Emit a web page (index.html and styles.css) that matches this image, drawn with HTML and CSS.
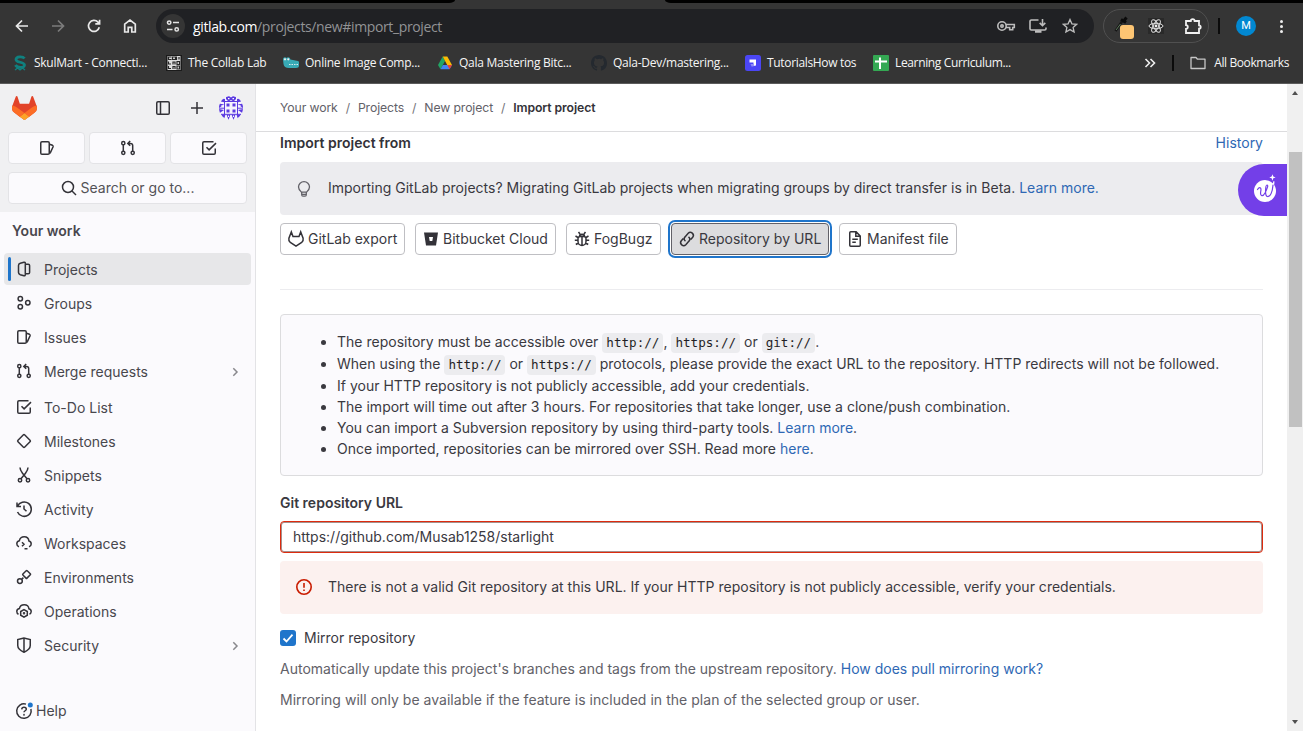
FILE: index.html
```html
<!DOCTYPE html>
<html lang="en">
<head>
<meta charset="utf-8">
<title>Import project · GitLab</title>
<link rel="stylesheet" href="styles.css">
</head>
<body>
<svg class="sprite" aria-hidden="true">
  <symbol id="issues" viewBox="0 0 16 16"><rect x="1.75" y="1.75" width="8.5" height="12.5" rx="1.25"/><path d="M10.5 4.2l3 1.1c.6.3.8.8.6 1.4l-2.6 5.6c-.3.6-.7 1-1.2 1.1"/></symbol>
  <symbol id="merge" viewBox="0 0 16 16"><circle cx="3.3" cy="3.2" r="1.6"/><circle cx="3.3" cy="12.8" r="1.6"/><circle cx="12.7" cy="12.8" r="1.6"/><path d="M3.3 4.8v6.4M12.7 11.2V5.6c0-1.4-.8-2.2-2.2-2.2H8.4M10.2 1L7.8 3.4l2.4 2.4"/></symbol>
  <symbol id="todo" viewBox="0 0 16 16"><path d="M12.5 1.75H3c-.7 0-1.25.5-1.25 1.25v10c0 .7.5 1.25 1.25 1.25h10c.7 0 1.25-.5 1.25-1.25V8.5M5.5 7.3l2.6 2.6 6.9-6.8"/></symbol>
  <symbol id="chevron" viewBox="0 0 16 16"><path d="M6.3 4.3L10 8l-3.700 3.700"/></symbol>
</svg>

<header class="chrome">
  <div class="tabstrip"><span class="tab-left"></span><span class="tab-right"></span></div>
  <div class="toolbar">
    <svg class="nav n1" viewBox="0 0 16 16"><path d="M14 8H2.500M8 2.500L2.500 8 8 13.500"/></svg>
    <svg class="nav n2" viewBox="0 0 16 16"><path d="M2 8h11.500M8 2.500L13.500 8 8 13.500"/></svg>
    <svg class="nav n3" viewBox="0 0 16 16"><path d="M13.300 9.300A5.500 5.500 0 1 1 12 4.200l1.300 1.300M13.600 1.700v4.200H9.300"/></svg>
    <svg class="nav n4" viewBox="0 0 16 16"><path d="M2.700 14V6.200L8 2l5.300 4.200V14H9.800V9.300H6.200V14z"/></svg>
    <div class="omnibox">
      <span class="site"><svg viewBox="0 0 16 16"><circle cx="4.200" cy="4.600" r="1.700"/><path d="M8 4.600h6M2 11.400h5.500"/><circle cx="11.700" cy="11.400" r="1.700"/></svg></span>
      <span class="url"><b>gitlab.com</b>/projects/new#import_project</span>
      <svg class="ob key" viewBox="0 0 20 16"><circle cx="6" cy="8" r="4.200"/><circle cx="6" cy="8" r="1.200"/><path d="M10 6.500h8.300v3h-1.600v2.300h-3V9.500H10"/></svg>
      <svg class="ob inst" viewBox="0 0 18 16"><path d="M9.500 2H2.300C1.600 2 1 2.500 1 3.200v7.600c0 .7.600 1.200 1.300 1.200h13.400c.7 0 1.300-.5 1.300-1.200V9.500M13.500 1v6.500M10.700 4.900l2.800 2.800 2.800-2.800"/><path d="M6 13.500h6.500" class="foot"/></svg>
      <svg class="ob star" viewBox="0 0 16 16"><path d="M8 1.500l1.900 4.300 4.700.5-3.500 3.100 1 4.600L8 11.600 3.900 14l1-4.600L1.400 6.300l4.700-.5z"/></svg>
    </div>
    <div class="extensions">
      <svg class="picker" viewBox="0 0 20 24"><path d="M1.500 15L8 5.500" stroke="#161616" stroke-width="2.500"/><path d="M2 14l4.500-6" stroke="#5e7c5d"/><path d="M7 3.500l5 3M10.500 4l2-2.500" stroke="#0b0b0b" stroke-width="3"/><rect x="6" y="9" width="14" height="14" rx="3" fill="#fdc573"/></svg>
      <svg class="react" viewBox="0 0 16 16"><path d="M0 0h16v16H0z" fill="#292929"/><g fill="none" stroke="#ddd" stroke-width="1"><ellipse cx="8" cy="8" rx="7" ry="2.700"/><ellipse cx="8" cy="8" rx="7" ry="2.700" transform="rotate(60 8 8)"/><ellipse cx="8" cy="8" rx="7" ry="2.700" transform="rotate(120 8 8)"/></g><circle cx="8" cy="8" r="1.400" fill="#eee"/></svg>
      <svg class="puzzle" viewBox="0 0 18 18"><path d="M2 4h4.800a1.900 1.900 0 0 1 3.800 0H15v4.300a1.700 1.700 0 0 1 0 3.400V16H2v-4.200c2.400-.2 2.400-3.400 0-3.600z"/></svg>
    </div>
    <span class="bar"></span>
    <span class="profile">M</span>
    <span class="dots"><i></i><i></i><i></i></span>
  </div>
  <nav class="bookmarks">
    <a class="bm w154"><svg viewBox="0 0 16 16"><path d="M12.500 3.500C11 1.200 4 1 4 4.500s8.500 2 8.500 5.500S5 13 3.500 10" fill="none" stroke="#10807f" stroke-width="2.800"/><path d="M3 15l2.500-2 2.500 2 2.500-2 2.500 2" fill="none" stroke="#10807f" stroke-width="1.300"/></svg><span>SkulMart - Connecti...</span></a>
    <a class="bm w117"><svg viewBox="0 0 16 16"><path d="M0 0h16v16H0z" fill="#1b1b1b"/><path d="M1.500 1h13v14h-13z" fill="#ddd"/><path d="M5.500 2h-3v2.500h3M6.500 2h3v2.500h-3zM10.500 1.500v3.500M13 2v2.500M2.500 6.500v2.500H5M7 9.500V7h2v2.500M11 6.500v3h2.500v-3zM2.500 11v2.500H5M7 14v-2.500h2V14M11 11v3h2.500v-3z" fill="none" stroke="#252525" stroke-width="1.200"/></svg><span>The Collab Lab</span></a>
    <a class="bm w154"><svg viewBox="0 0 16 16"><path d="M0 4.500c0-2.500 2.500-3 3.500-1.500 1.200-1.500 3.500-1 3.900 1.500L15 6q1 0 1 1.500v3Q16 13 13 13H6Q1 13 .5 9z" fill="#38aab5"/><circle cx="2" cy="4.300" r="1.100" fill="#eee"/><circle cx="5.300" cy="4.300" r="1.100" fill="#eee"/><path d="M6 9.500h9" stroke="#d8eced" stroke-dasharray="1.500 1"/></svg><span>Online Image Comp...</span></a>
    <a class="bm w154"><svg viewBox="0 0 16 16"><path d="M5.700 1.500L1 10l2.500 4.200L8 6z" fill="#22a565"/><path d="M5.700 1.500h4.600L15 10h-4.800z" fill="#fbbc05"/><path d="M3.500 14.200L5.900 10H15l-2.500 4.200z" fill="#4285f4"/><path d="M10.300 10H15l-2.500 4.200z" fill="#ea4335"/></svg><span>Qala Mastering Bitc...</span></a>
    <a class="bm w154"><svg viewBox="0 0 16 16"><path fill="#24292f" d="M8 0C3.580 0 0 3.580 0 8c0 3.540 2.290 6.530 5.470 7.590.4.070.55-.17.55-.38 0-.19-.01-.82-.01-1.490-2.010.37-2.530-.49-2.690-.94-.09-.23-.48-.94-.82-1.130-.28-.15-.68-.52-.01-.53.63-.01 1.080.58 1.230.82.720 1.210 1.870.87 2.330.66.070-.52.280-.87.510-1.070-1.780-.2-3.640-.89-3.640-3.950 0-.87.310-1.590.820-2.150-.08-.2-.36-1.020.080-2.120 0 0 .67-.21 2.200.82A7.600 7.600 0 0 1 8 3.870c.68 0 1.360.09 2 .26 1.530-1.040 2.200-.82 2.200-.82.44 1.100.16 1.920.08 2.120.51.56.82 1.270.82 2.150 0 3.070-1.870 3.750-3.650 3.950.29.25.54.73.54 1.480 0 1.070-.01 1.930-.01 2.200 0 .21.15.46.55.38A8 8 0 0 0 16 8c0-4.420-3.580-8-8-8z"/></svg><span>Qala-Dev/mastering...</span></a>
    <a class="bm w128"><svg viewBox="0 0 16 16"><rect width="16" height="16" rx="2.500" fill="#4b46f5"/><path d="M4.500 4.500H11v6L8.500 11V7.500h-4z" fill="#fff"/><path d="M5.500 9h3v2.500h-2z" fill="#8f8cf8"/></svg><span>TutorialsHow tos</span></a>
    <a class="bm last"><svg viewBox="0 0 16 16"><rect width="16" height="16" rx="1" fill="#34a853"/><path d="M2 6.500h12M7 2.500v11.500" stroke="#fff" stroke-width="2"/></svg><span>Learning Curriculum...</span></a>
    <svg class="more" viewBox="0 0 12 12"><path d="M1.500 2L5.500 6l-4 4M6.500 2l4 4-4 4"/></svg>
    <span class="bar small"></span>
    <a class="bm all"><svg viewBox="0 0 16 14"><path d="M1 1.500h5l1.500 1.700H15v9.300H1z" fill="none" stroke="#c7c7c7" stroke-width="1.300" stroke-linejoin="round"/></svg><span>All Bookmarks</span></a>
  </nav>
</header>

<div class="page">
  <aside class="sidebar">
    <div class="top">
      <div class="brand">
        <svg class="logo" viewBox="0 0 25 24"><path d="m24.507 9.500-.034-.09L21.082.562a.896.896 0 0 0-1.694.091l-2.290 7.010H7.825L5.535.653a.898.898 0 0 0-1.694-.09L.451 9.411.416 9.500a6.297 6.297 0 0 0 2.090 7.278l.012.01.03.022 5.160 3.867 2.560 1.935 1.554 1.176a1.051 1.051 0 0 0 1.268 0l1.555-1.176 2.560-1.935 5.197-3.890.014-.01A6.297 6.297 0 0 0 24.507 9.500Z" fill="#E24329"/><path d="m24.507 9.500-.034-.09a11.440 11.440 0 0 0-4.560 2.051l-7.447 5.632 4.742 3.584 5.197-3.890.014-.01A6.297 6.297 0 0 0 24.507 9.500Z" fill="#FC6D26"/><path d="m7.707 20.677 2.560 1.935 1.555 1.176a1.051 1.051 0 0 0 1.268 0l1.555-1.176 2.560-1.935-4.743-3.584-4.755 3.584Z" fill="#FCA326"/><path d="M5.010 11.461a11.430 11.430 0 0 0-4.560-2.050L.416 9.500a6.297 6.297 0 0 0 2.090 7.278l.012.01.03.022 5.160 3.867 4.745-3.584-7.444-5.632Z" fill="#FC6D26"/></svg>
        <svg class="ic collapse" viewBox="0 0 16 16"><rect x="1.750" y="1.750" width="12.500" height="12.500" rx="1.250"/><path d="M5.500 2v12"/></svg>
        <svg class="ic plus" viewBox="0 0 16 16"><path d="M8 2v12M2 8h12"/></svg>
        <svg class="avatar" viewBox="0 0 24 24"><defs><clipPath id="round"><circle cx="12" cy="12" r="12"/></clipPath></defs><g clip-path="url(#round)"><path fill="#f6f4fd" d="M0 0h24v24H0z"/><g fill="#5c3be0"><path d="M7 0h3l2 1.500L14 0h3v3l-2.500 2.500L12 4 9.500 5.500 7 3zM2 2l4 1v3.500L2 5.500zM22 2l-4 1v3.500l4-1zM7.500 7.500h3v3h-3zM13.500 7.500h3v3h-3zM7.500 13.500h3v3h-3zM13.500 13.500h3v3h-3zM0 7.500l5 1-5 3.500zM24 7.500l-5 1 5 3.500zM0 13l5 1-5 3.500zM24 13l-5 1 5 3.500zM2 18.500h4.500l-1.500 5zM7.500 18.500h4L9.500 24zM12.500 18.500h4L14.500 24zM17.500 18.500H22l-3 5z"/></g><g fill="none" stroke="#5c3be0"><path d="M5.500 3v16M18.500 3v16M5 5.500h14M2 18.300h20M0 12.200h5M19 12.200h5"/></g><path fill="#fff" d="M9 2h1.500v1.200H9zM13.500 2H15v1.200h-1.500zM2.500 9h1.200v1.200H2.500zM20.300 9h1.200v1.200h-1.200zM9 19.500h1v1.500H9zM14 19.500h1v1.500h-1z"/></g></svg>
      </div>
      <div class="counters">
        <a><svg class="ic"><use href="#issues"/></svg></a>
        <a><svg class="ic"><use href="#merge"/></svg></a>
        <a><svg class="ic"><use href="#todo"/></svg></a>
      </div>
      <div class="search"><svg class="ic" viewBox="0 0 16 16"><circle cx="7" cy="7" r="5.500"/><path d="M11 11l4 4"/></svg><span>Search or go to...</span></div>
    </div>
    <h2>Your work</h2>
    <ul class="menu">
      <li class="active"><svg class="ic" viewBox="0 0 16 16"><path d="M9.300 2.200v11.600M9.300 3.200h2.900c.8 0 1.400.6 1.400 1.400v6.800c0 .8-.6 1.400-1.400 1.400H9.300M8 14.800l-3.700-1.100c-1.200-.4-1.800-1-1.800-2.100V4.400c0-1.100.6-1.700 1.800-2.100L8 1.200c.8-.2 1.300.2 1.300 1v11.600c0 .8-.5 1.200-1.300 1z"/></svg><span>Projects</span></li>
      <li><svg class="ic" viewBox="0 0 16 16"><circle cx="4.300" cy="3.700" r="2.200"/><circle cx="4.300" cy="11.800" r="2.200"/><circle cx="11.800" cy="7.800" r="2.200"/></svg><span>Groups</span></li>
      <li><svg class="ic"><use href="#issues"/></svg><span>Issues</span></li>
      <li class="parent"><svg class="ic"><use href="#merge"/></svg><span>Merge requests</span><svg class="ic chev"><use href="#chevron"/></svg></li>
      <li><svg class="ic"><use href="#todo"/></svg><span>To-Do List</span></li>
      <li><svg class="ic" viewBox="0 0 16 16"><path d="M7.200 2L2 7.200q-.8.800 0 1.600L7.200 14q.8.800 1.600 0L14 8.800q.8-.8 0-1.600L8.800 2q-.8-.8-1.600 0z"/></svg><span>Milestones</span></li>
      <li><svg class="ic" viewBox="0 0 16 16"><circle cx="4" cy="13.300" r="1.700"/><circle cx="12" cy="13.300" r="1.700"/><path d="M4 .5c0 2 .8 3.500 2.500 5.700L11 11.800M12 .5c0 2-.8 3.500-2.500 5.700L5 11.800"/></svg><span>Snippets</span></li>
      <li><svg class="ic" viewBox="0 0 16 16"><path d="M1.500 5.300A7.200 7.200 0 1 1 1.500 11M1 1.500v4h4M8 4.500V8l2.500 2.300"/></svg><span>Activity</span></li>
      <li><svg class="ic" viewBox="0 0 16 16"><path d="M3 11.800C1.500 11.300.8 10 .8 8.800c0-1.600 1.100-2.800 2.600-3.100C3.900 3.300 5.900 1.800 8.200 1.800c2.600 0 4.500 1.900 4.700 4.200 1.500.4 2.300 1.500 2.300 2.900 0 1.300-.8 2.400-2.200 2.800M6 7.300l2 2-2 2M8.500 13.800h3"/></svg><span>Workspaces</span></li>
      <li><svg class="ic" viewBox="0 0 16 16"><circle cx="3.900" cy="12.100" r="2.400"/><path d="M5.700 10.300l1.700-1.700M10.200 1.700L6.900 5q-.5.500 0 1l3.100 3.100q.5.500 1 0l3.300-3.300q.5-.5 0-1l-3.100-3.100q-.5-.5-1 0z"/></svg><span>Environments</span></li>
      <li><svg class="ic" viewBox="0 0 16 16"><path d="M2.500 11.200C1.300 10.700.8 9.700.8 8.600c0-1.600 1.100-2.700 2.600-3C3.900 3.300 5.900 1.800 8.200 1.800c2.600 0 4.500 1.800 4.700 4 1.500.4 2.300 1.500 2.300 2.800 0 1.100-.6 2.100-1.700 2.600M8 6.600l3.300 1.900v3.700L8 14.100l-3.300-1.900V8.500z"/><circle cx="8" cy="10.300" r=".5"/></svg><span>Operations</span></li>
      <li><svg class="ic" viewBox="0 0 16 16"><path d="M8 .9L1.750 2.500v6c0 3 2.500 5.100 6.250 6.700 3.750-1.600 6.250-3.700 6.250-6.700v-6zM8 1v14"/></svg><span>Security</span><svg class="ic chev"><use href="#chevron"/></svg></li>
    </ul>
    <div class="help"><svg class="ic" viewBox="0 0 16 16"><path d="M10 1.100A7.250 7.250 0 1 0 14.900 6"/><path d="M5.700 6.300C5.900 4.800 6.900 4.200 8 4.200c1.400 0 2.300.8 2.300 2C10.300 7.700 8 7.800 8 9.300"/><circle cx="8" cy="11.700" r=".3"/><circle cx="14.300" cy="2" r="2.500" class="dot"/></svg><span>Help</span></div>
  </aside>

  <main>
    <nav class="crumbs"><span>Your work</span><i>/</i><span>Projects</span><i>/</i><span>New project</span><i>/</i><b>Import project</b></nav>
    <div class="content">
      <div class="heading"><h1>Import project from</h1><a>History</a></div>
      <div class="alert info"><svg class="ic" viewBox="0 0 16 16"><path d="M5.500 11.200C4 9.700 2.500 8.400 2.500 6a5.500 5.300 0 0 1 11 0c0 2.400-1.500 3.700-3 5.200zM5.700 11.500v2.200c0 1 .5 1.500 1.300 1.500h2c.8 0 1.300-.5 1.300-1.500v-2.200M5.700 13.300h4.600"/></svg><p>Importing GitLab projects? Migrating GitLab projects when migrating groups by direct transfer is in Beta. <a>Learn more.</a></p></div>
      <div class="sources">
        <button class="b1"><svg class="ic" viewBox="0 0 16 16"><path d="M3.300.9L.9 7.300c-.4 1.700.2 3.100 1.400 4L8 15.200l5.700-3.900c1.200-.9 1.800-2.300 1.400-4L12.700.9 11 5.500H5z"/></svg><span>GitLab export</span></button>
        <button class="b2"><svg class="ic" viewBox="0 0 16 16"><path class="solid" fill-rule="evenodd" d="M1 1.500h14l-2 13H3zM6 6l.7 4h2.600L10 6z"/></svg><span>Bitbucket Cloud</span></button>
        <button class="b3"><svg class="ic" viewBox="0 0 16 16"><path d="M4 7.500C4 4.500 12 4.500 12 7.500v3a4 4 0 0 1-8 0zM5.500 5.500c0-3 5-3 5 0M4.500 1l1.500 2M11.500 1L10 3M8 6v8.500M4 6.500L1.500 5M12 6.500L14.500 5M4 9.300H.8M12 9.300h3.200M4.300 12l-2.500 1.500M11.700 12l2.500 1.500"/></svg><span>FogBugz</span></button>
        <button class="b4 selected"><svg class="ic" viewBox="0 0 16 16"><path d="M6.500 10.200C4.800 8.800 4.900 7 6 5.900l3.200-3.600c2.600-2.600 6.800.9 4.500 3.900l-2 2.300M9.500 5.800c1.700 1.400 1.600 3.200.5 4.300l-3.200 3.600c-2.600 2.600-6.800-.9-4.500-3.900l2-2.300"/></svg><span>Repository by URL</span></button>
        <button class="b5"><svg class="ic" viewBox="0 0 16 16"><path d="M3.750.85h5.400l4.100 4.100v9.200c0 .6-.4 1-1 1h-8.500c-.6 0-1-.4-1-1V1.850c0-.6.4-1 1-1zM8.800 1v4.300H13M5.300 8.300h5.500M5.300 11.300h3.500"/></svg><span>Manifest file</span></button>
      </div>
      <hr>
      <ul class="notes">
        <li>The repository must be accessible over <code>http://</code>, <code>https://</code> or <code>git://</code>.</li>
        <li>When using the <code>http://</code> or <code>https://</code> protocols, please provide the exact URL to the repository. HTTP redirects will not be followed.</li>
        <li>If your HTTP repository is not publicly accessible, add your credentials.</li>
        <li>The import will time out after 3 hours. For repositories that take longer, use a clone/push combination.</li>
        <li>You can import a Subversion repository by using third-party tools. <a>Learn more</a>.</li>
        <li>Once imported, repositories can be mirrored over SSH. Read more <a>here</a>.</li>
      </ul>
      <label class="field">Git repository URL</label>
      <div class="input">https://github.com/Musab1258/starlight</div>
      <div class="alert danger"><svg class="ic" viewBox="0 0 16 16"><circle cx="8" cy="8" r="7.200"/><path d="M8 4v4.700M8 10.500v1.500"/></svg><p>There is not a valid Git repository at this URL. If your HTTP repository is not publicly accessible, verify your credentials.</p></div>
      <div class="check"><svg viewBox="0 0 16 16"><rect width="16" height="16" rx="3" fill="#1f75cb"/><path d="M3.500 8.500l3 3 6-6.800" fill="none" stroke="#fff" stroke-width="1.800"/></svg><span>Mirror repository</span></div>
      <p class="hint">Automatically update this project's branches and tags from the upstream repository. <a>How does pull mirroring work?</a></p>
      <p class="hint wide">Mirroring will only be available if the feature is included in the plan of the selected group or user.</p>
    </div>
    <div class="widget"><svg viewBox="0 0 28 32"><circle cx="13" cy="18" r="11" fill="#fff"/><path d="M18.500 4.500h3l3 6-3 1z" fill="#733fe8"/><path d="M20 13l1.500-5 1 .5-.5 5z" fill="#fff"/><path d="M5.500 16.500c2-3 4-2 3.300 1.500-1 5 1.700 6.500 4.200 2 2.500-5 3.500-8 2-8s-2.500 11 .500 11.500c3 .5 5-5 5.500-11.500" fill="none" stroke="#733fe8" stroke-width="1.200" stroke-linecap="round"/><path d="M20.500 1.200l.8 2.300 2.300.9-2.300.9-.8 2.500-.9-2.500-2.300-.9 2.300-.9z" fill="#fff"/></svg></div>
  </main>
  <div class="scrollbar"><i class="up"></i><div class="thumb"></div><i class="down"></i></div>
</div>
</body>
</html>
```
FILE: styles.css
```css
* { box-sizing: border-box; }
body { margin: 0; width: 1303px; height: 731px; overflow: hidden; background: #fff; color: #3a393f; font: 14px/20px Inter, "Liberation Sans", sans-serif; }
svg { flex: none; display: block; }
p, h1, h2, ul { margin: 0; padding: 0; }
.sprite { position: absolute; width: 0; height: 0; }
.ic { width: 16px; height: 16px; fill: none; stroke: #333238; stroke-width: 1.5; overflow: visible; }
a { color: #2f68b4; text-decoration: none; }

/* Browser frame */
.chrome { height: 84px; background: #353535; border-bottom: 1px solid #5b5b5b; font-family: "Open Sans", "Noto Sans", sans-serif; color: #f5f5f5; }
.tabstrip { height: 3px; display: flex; justify-content: space-between; }
.tab-left { width: 455px; background: #000; border-bottom-right-radius: 6px 3px; }
.tab-right { width: 638px; background: #000; border-bottom-left-radius: 6px 3px; }
.toolbar { height: 46px; display: flex; align-items: center; }
.nav { width: 16px; height: 16px; fill: none; stroke: #e9e9e9; stroke-width: 1.7; }
.n1 { margin-left: 14px; }
.n2 { margin-left: 20px; stroke: #7c7c7c; }
.n3 { margin-left: 20px; }
.n4 { margin-left: 20px; }
.omnibox { margin-left: 18px; width: 938px; height: 34px; border-radius: 17px; background: #202124; display: flex; align-items: center; padding: 0 16px 0 5px; }
.site { width: 24px; height: 24px; border-radius: 50%; background: #353535; display: grid; place-items: center; }
.site svg { width: 16px; height: 16px; fill: none; stroke: #e5e5e5; stroke-width: 1.5; }
.url { margin-left: 8px; padding-top: 1px; font-size: 14px; color: #929395; letter-spacing: -0.37px; flex: 1; white-space: nowrap; }
.url b { color: #fff; font-weight: 400; }
.ob { fill: none; stroke: #bdbdbd; stroke-width: 1.6; height: 16px; }
.key { width: 20px; }
.inst { width: 18px; margin-left: 13px; }
.inst .foot { stroke-width: 2.5; }
.star { width: 16px; margin-left: 15px; stroke-width: 1.3; }
.extensions { margin-left: 9px; width: 106px; height: 34px; border: 1px solid #505050; border-radius: 17px; display: flex; align-items: center; padding-left: 10px; }
.picker { width: 20px; height: 24px; margin-top: 4px; fill: none; }
.react { width: 16px; height: 16px; margin-left: 14px; }
.puzzle { width: 18px; height: 18px; margin-left: 20px; fill: none; stroke: #f0f0f0; stroke-width: 1.8; }
.bar { width: 2px; height: 16px; background: #0b0b0b; margin-left: 9px; }
.profile { width: 20px; height: 20px; margin-left: 16px; border-radius: 50%; background: #0288d1; color: #fff; font: 11px/20px Roboto, sans-serif; text-align: center; }
.dots { margin-left: 24px; display: grid; gap: 2px; }
.dots i { width: 3px; height: 3px; border-radius: 50%; background: #eee; }
.bookmarks { height: 34px; padding: 0 14px 0 12px; margin-top: -3px; display: flex; align-items: center; }
.bm { display: flex; align-items: center; gap: 6px; color: #f5f5f5; font-size: 12px; letter-spacing: -0.26px; white-space: nowrap; }
.bm svg { width: 16px; height: 16px; }
.w154 { width: 154px; }
.w117 { width: 117px; }
.w128 { width: 128px; letter-spacing: -0.33px; }
.last { letter-spacing: -0.36px; }
.more { width: 12px; height: 12px; margin-left: auto; fill: none; stroke: #eee; stroke-width: 1.6; }
.small { margin-left: 16px; }
.all { margin-left: 16px; gap: 8px; letter-spacing: -0.4px; }

/* Sidebar */
.page { height: 647px; display: flex; }
.sidebar { width: 256px; background: #fbfafd; border-right: 1px solid #e3e3e6; display: flex; flex-direction: column; color: #48474d; }
.top { height: 128px; background: #f0f0f2; padding: 12px 8px 8px; }
.brand { height: 24px; display: flex; align-items: center; padding-left: 4px; }
.logo { width: 25px; height: 24px; }
.collapse { margin-left: 118px; }
.plus { margin-left: 18px; }
.avatar { width: 24px; height: 24px; margin-left: 14px; }
.counters { display: grid; grid-template-columns: repeat(3, 77px); gap: 4px; margin-top: 12px; }
.counters a, .search { height: 32px; background: #fbfafd; border: 1px solid #e3e3e6; border-radius: 4px; display: flex; align-items: center; justify-content: center; }
.search { margin-top: 8px; gap: 4px; width: 239px; color: #535257; }
.sidebar h2 { font-size: 14px; font-weight: 600; line-height: 20px; margin: 9px 0 0 12px; }
.menu { list-style: none; margin: 12px 4px 0; }
.menu li { height: 32px; margin-bottom: 2px; border-radius: 4px; display: flex; align-items: center; padding: 0 8px 0 12px; gap: 12px; }
.menu span { padding-top: 2px; }
.menu .parent { margin-bottom: 4px; }
.menu .active { background: #e7e7e9; padding-left: 4px; }
.menu .active::before { content: ""; width: 3px; height: 24px; border-radius: 2px; background: #1f75cb; margin-right: -7px; }
.menu .chev { margin-left: auto; margin-top: 2px; stroke: #89888d; }
.help { display: flex; align-items: center; gap: 4px; height: 32px; margin: auto 0 4px 16px; }
.ic .dot { fill: #1f75cb; stroke: none; }

/* Content */
main { width: 1031px; position: relative; }
.crumbs { height: 48px; border-bottom: 1px solid #dcdcde; padding-left: 24px; display: flex; align-items: center; font-size: 12.25px; letter-spacing: -0.11px; color: #626168; }
.crumbs i { font-style: normal; width: 20.200px; text-align: center; color: #737278; }
.crumbs b { font-weight: 600; color: #333238; letter-spacing: -0.1px; }
.content { padding: 1px 24px 0; }
.heading { display: flex; justify-content: space-between; line-height: 20px; }
.heading h1 { font-size: 14px; font-weight: 600; color: #333238; }
.alert { height: 53px; border-radius: 4px; display: flex; align-items: center; padding-left: 16px; gap: 16px; white-space: nowrap; }
.alert p { padding-bottom: 2px; }
.info { background: #ececef; margin-top: 9px; letter-spacing: 0.003px; }
.info .ic { stroke: #626168; stroke-width: 1.3; }
.danger { background: #fcf1ef; margin-top: 8px; letter-spacing: 0.012px; }
.danger .ic { stroke: #c91c00; stroke-width: 1.6; margin-top: -1px; }
.sources { display: flex; gap: 10px; margin-top: 8px; }
.sources button { height: 32px; background: #fff; border: 1px solid #bfbfc3; border-radius: 4px; padding: 0 0 0 7px; display: flex; align-items: center; gap: 4px; color: #3a393f; font: inherit; white-space: nowrap; }
.b1 { width: 125px; }
.b2 { width: 141px; }
.b3 { width: 95px; }
.sources .b4 { width: 158px; background: #dcdcde; border-color: #626168; box-shadow: 0 0 0 1px #fff, 0 0 0 3px #1f75cb; }
.b5 { width: 118px; letter-spacing: 0.05px; }
.solid { fill: #333238; stroke: none; }
hr { border: 0; height: 1px; background: #ececef; margin: 34px 0 24px; }
.notes { height: 162px; border: 1px solid #dcdcde; border-radius: 4px; background: #fbfafd; padding: 16px 0 0 56px; line-height: 21px; white-space: nowrap; letter-spacing: 0.01px; }
.notes li:nth-child(-n+2) { height: 22px; line-height: 22px; }
.notes li::marker { font-size: 14px; }
code { font: 12.6px/16px "DejaVu Sans Mono", "Liberation Mono", monospace; letter-spacing: 0; background: #ececef; border-radius: 4px; padding: 2px 4px 3px; color: #1f1e24; }
.field { display: block; font-weight: 600; margin-top: 17px; }
.input { height: 32px; margin-top: 8px; border: 1px solid #dd2b0e; box-shadow: inset 0 0 0 1px #a5908e; border-radius: 4px; padding: 0 12px; line-height: 30px; }
.check { display: flex; align-items: center; gap: 8px; height: 20px; margin-top: 14px; }
.check svg { width: 16px; height: 16px; }
.hint { color: #626168; white-space: nowrap; line-height: 20px; margin-top: 11px; letter-spacing: 0.01px; }
.wide { letter-spacing: 0.032px; }
.widget { position: absolute; right: 0; top: 80px; width: 49px; height: 52px; border-radius: 26px 0 0 26px; background: #733fe8; display: grid; padding: 9px 0 0 14px; }
.widget svg { width: 28px; height: 32px; }
.scrollbar { width: 16px; background: #f0f0f0; display: flex; flex-direction: column; align-items: center; }
.scrollbar i { border: 3.500px solid transparent; }
.scrollbar .up { border-top: 0; border-bottom: 4px solid #505050; margin-top: 7px; }
.thumb { width: 13px; height: 275px; background: #c1c1c1; margin-top: 57px; }
.scrollbar .down { border-bottom: 0; border-top: 4px solid #505050; margin: auto 0 7px; }
```
